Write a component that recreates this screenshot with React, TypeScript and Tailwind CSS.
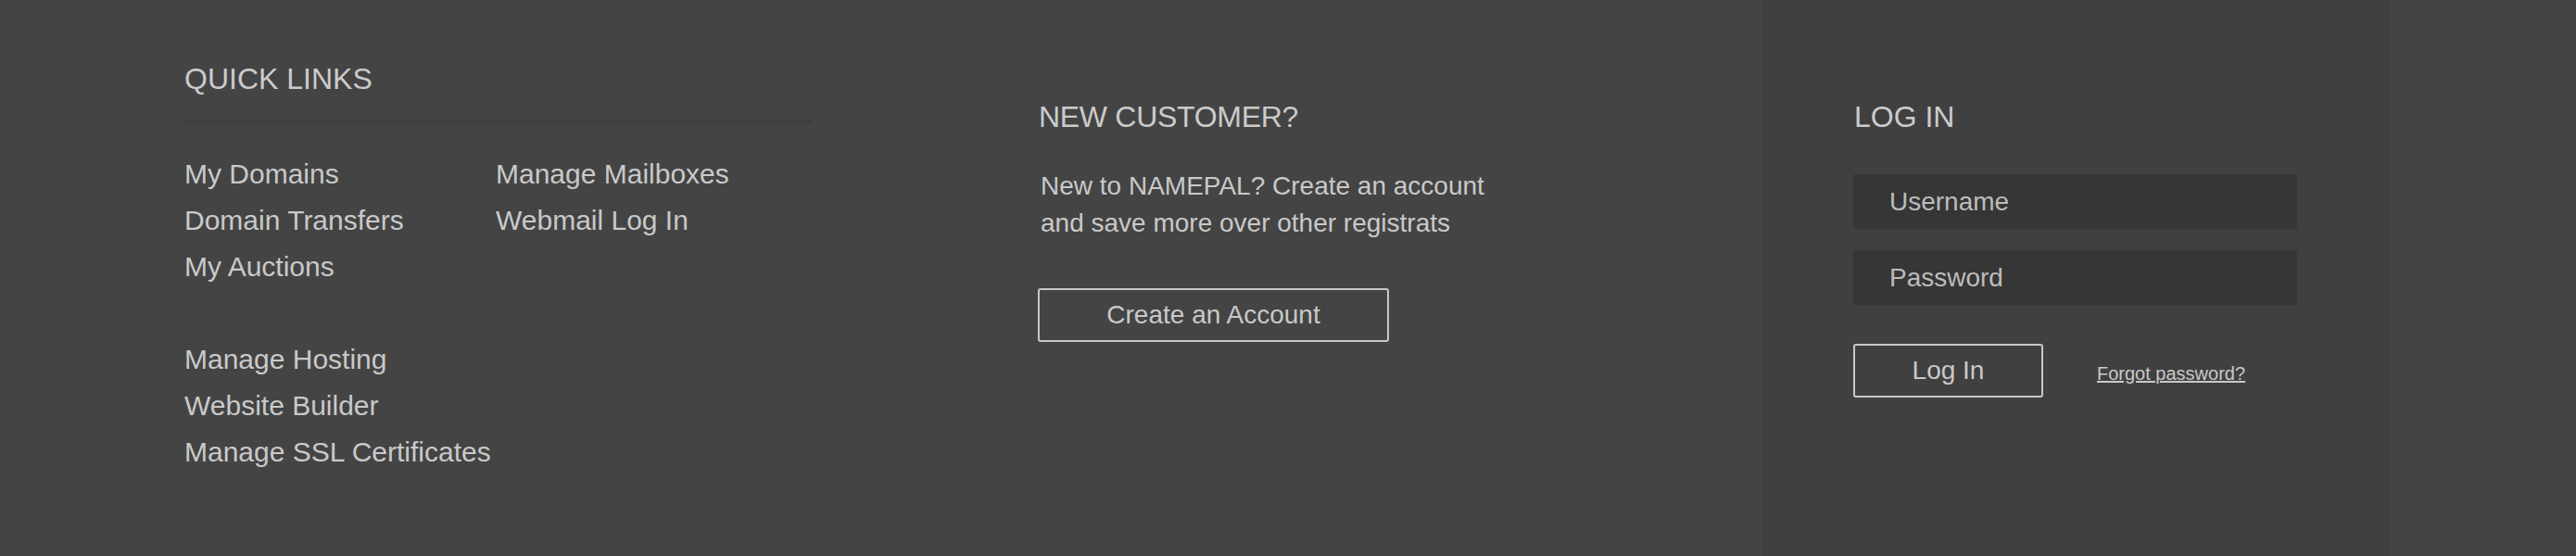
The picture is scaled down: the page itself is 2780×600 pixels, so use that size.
const sans = "font-['Liberation_Sans',Arial,sans-serif]";

const linkGroups = [
  [
    ["My Domains", "Manage Mailboxes"],
    ["Domain Transfers", "Webmail Log In"],
    ["My Auctions", ""],
  ],
  [
    ["Manage Hosting", ""],
    ["Website Builder", ""],
    ["Manage SSL Certificates", ""],
  ],
];

function QuickLinks() {
  return (
    <div className="w-[922px] pt-[69px]">
      <h3 className="text-[32px] leading-none text-[#cbcbcb]">QUICK LINKS</h3>
      <div className="mt-[28px] h-[4px] w-[678px] rounded-full bg-[#3f3f3f]" />
      <div className="mt-[30px] flex flex-col gap-[50px]">
        {linkGroups.map((group, gi) => (
          <ul key={gi}>
            {group.map(([a, b]) => (
              <li key={a} className="flex text-[30px] leading-[50px] text-[#c9c9c9]">
                <a href="#" className="w-[336px] shrink-0">{a}</a>
                {b && <a href="#">{b}</a>}
              </li>
            ))}
          </ul>
        ))}
      </div>
    </div>
  );
}

function NewCustomer() {
  return (
    <div className="w-[781px] pt-[110px]">
      <h3 className="text-[32px] leading-none tracking-[-0.3px] text-[#cbcbcb]">NEW CUSTOMER?</h3>
      <p className="ml-[2px] mt-[39px] w-[500px] text-[28px] leading-[40px] text-[#c9c9c9]">
        New to NAMEPAL? Create an account and save more over other registrats
      </p>
      <button className="-ml-px mt-[50px] h-[58px] w-[379px] rounded-[3px] border-2 border-[#c8c8c8] text-[28px] text-[#c9c9c9]">
        Create an Account
      </button>
    </div>
  );
}

function LogIn() {
  const field =
    "h-[59px] w-[479px] rounded-[3px] bg-[#363636] pl-[39px] text-[28px] text-[#c9c9c9] outline-none placeholder:text-[#bcbcbc]";
  return (
    <div className="w-[678px] bg-[#404040] pl-[98px] pt-[110px]">
      <h3 className="ml-px text-[32px] leading-none text-[#cbcbcb]">LOG IN</h3>
      <form className="mt-[46px] flex flex-col gap-[23px]">
        <input placeholder="Username" className={field} />
        <input type="password" placeholder="Password" className={field} />
        <div className="mt-[19px] flex items-center">
          <button
            type="button"
            className="h-[58px] w-[205px] rounded-[3px] border-2 border-[#c8c8c8] text-[28px] text-[#c9c9c9]"
          >
            Log In
          </button>
          <a href="#" className="ml-[58px] mt-[6px] text-[20px] leading-none text-[#c9c9c9] underline">
            Forgot password?
          </a>
        </div>
      </form>
    </div>
  );
}

export default function App() {
  return (
    <footer className={`${sans} h-[600px] w-[2780px] overflow-hidden bg-[#444444]`}>
      <div className="ml-[199px] flex h-full">
        <QuickLinks />
        <NewCustomer />
        <LogIn />
      </div>
    </footer>
  );
}
